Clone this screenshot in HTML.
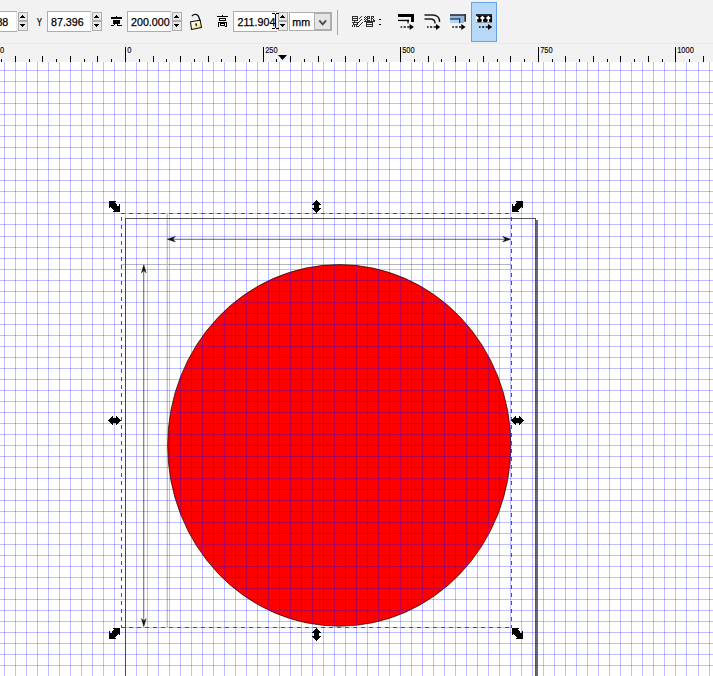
<!DOCTYPE html><html><head><meta charset="utf-8"><title>Inkscape</title><style>
html,body{margin:0;padding:0;background:#fff;overflow:hidden}
body{width:713px;height:676px;position:relative;font-family:"Liberation Sans",sans-serif}
svg{position:absolute;left:0;top:0;display:block}
text{font-family:"Liberation Sans",sans-serif}
.tb text{stroke:#000;stroke-width:0.25px}
</style></head><body>
<svg width="713" height="676" viewBox="0 0 713 676">
<rect x="0" y="0" width="713" height="676" fill="#fff"/>
<rect x="166.6" y="214" width="1.4" height="413" fill="#c2c2c2"/>
<g shape-rendering="crispEdges">
<rect x="121" y="264" width="391" height="1" fill="#b6b6b6"/>
<rect x="121" y="627" width="391" height="1" fill="#c8c8c8"/>
</g>
<g fill="#8a8a8a">
<rect x="172" y="238.7" width="334" height="1.3"/>
<rect x="143" y="270" width="1.3" height="352"/>
</g>
<g fill="#111" stroke="#111" stroke-width="0.5" stroke-linejoin="miter">
<path d="M167.3,239.2 L175.3,236.5 L172.8,239.2 L175.3,241.9 Z"/>
<path d="M510.7,239.2 L502.7,236.5 L505.2,239.2 L502.7,241.9 Z"/>
<path d="M143.8,264.8 L141.5,272.8 L143.8,270.4 L146.1,272.8 Z"/>
<path d="M143.8,626.6 L141.5,618.6 L143.8,621 L146.1,618.6 Z"/>
</g>
<ellipse cx="339.25" cy="445.4" rx="171.6" ry="180.8" fill="#ff0000" stroke="#1a0000" stroke-width="0.7"/>
<g shape-rendering="crispEdges">
<rect x="125" y="218" width="1" height="460" fill="#585858"/>
<rect x="125" y="218" width="411" height="1" fill="#585858"/>
<rect x="535" y="218" width="1" height="460" fill="#585858"/>
<rect x="536" y="220" width="2" height="460" fill="#6a6a6a"/>
</g>
<g shape-rendering="crispEdges" fill="#0000ff" fill-opacity="0.25">
<rect x="4" y="62" width="1" height="614"/>
<rect x="15" y="62" width="1" height="614"/>
<rect x="26" y="62" width="1" height="614"/>
<rect x="37" y="62" width="1" height="614"/>
<rect x="48" y="62" width="1" height="614"/>
<rect x="59" y="62" width="1" height="614"/>
<rect x="70" y="62" width="1" height="614"/>
<rect x="81" y="62" width="1" height="614"/>
<rect x="92" y="62" width="1" height="614"/>
<rect x="103" y="62" width="1" height="614"/>
<rect x="114" y="62" width="1" height="614"/>
<rect x="125" y="62" width="1" height="614"/>
<rect x="136" y="62" width="1" height="614"/>
<rect x="147" y="62" width="1" height="614"/>
<rect x="158" y="62" width="1" height="614"/>
<rect x="169" y="62" width="1" height="614"/>
<rect x="180" y="62" width="1" height="614"/>
<rect x="191" y="62" width="1" height="614"/>
<rect x="202" y="62" width="1" height="614"/>
<rect x="213" y="62" width="1" height="614"/>
<rect x="224" y="62" width="1" height="614"/>
<rect x="235" y="62" width="1" height="614"/>
<rect x="246" y="62" width="1" height="614"/>
<rect x="257" y="62" width="1" height="614"/>
<rect x="268" y="62" width="1" height="614"/>
<rect x="279" y="62" width="1" height="614"/>
<rect x="290" y="62" width="1" height="614"/>
<rect x="301" y="62" width="1" height="614"/>
<rect x="312" y="62" width="1" height="614"/>
<rect x="323" y="62" width="1" height="614"/>
<rect x="334" y="62" width="1" height="614"/>
<rect x="345" y="62" width="1" height="614"/>
<rect x="356" y="62" width="1" height="614"/>
<rect x="367" y="62" width="1" height="614"/>
<rect x="378" y="62" width="1" height="614"/>
<rect x="389" y="62" width="1" height="614"/>
<rect x="400" y="62" width="1" height="614"/>
<rect x="411" y="62" width="1" height="614"/>
<rect x="422" y="62" width="1" height="614"/>
<rect x="433" y="62" width="1" height="614"/>
<rect x="444" y="62" width="1" height="614"/>
<rect x="455" y="62" width="1" height="614"/>
<rect x="466" y="62" width="1" height="614"/>
<rect x="477" y="62" width="1" height="614"/>
<rect x="488" y="62" width="1" height="614"/>
<rect x="499" y="62" width="1" height="614"/>
<rect x="510" y="62" width="1" height="614"/>
<rect x="521" y="62" width="1" height="614"/>
<rect x="532" y="62" width="1" height="614"/>
<rect x="543" y="62" width="1" height="614"/>
<rect x="554" y="62" width="1" height="614"/>
<rect x="565" y="62" width="1" height="614"/>
<rect x="576" y="62" width="1" height="614"/>
<rect x="587" y="62" width="1" height="614"/>
<rect x="598" y="62" width="1" height="614"/>
<rect x="609" y="62" width="1" height="614"/>
<rect x="620" y="62" width="1" height="614"/>
<rect x="631" y="62" width="1" height="614"/>
<rect x="642" y="62" width="1" height="614"/>
<rect x="653" y="62" width="1" height="614"/>
<rect x="664" y="62" width="1" height="614"/>
<rect x="675" y="62" width="1" height="614"/>
<rect x="686" y="62" width="1" height="614"/>
<rect x="698" y="62" width="1" height="614"/>
<rect x="709" y="62" width="1" height="614"/>
<rect x="0" y="70" width="713" height="1"/>
<rect x="0" y="81" width="713" height="1"/>
<rect x="0" y="92" width="713" height="1"/>
<rect x="0" y="103" width="713" height="1"/>
<rect x="0" y="114" width="713" height="1"/>
<rect x="0" y="125" width="713" height="1"/>
<rect x="0" y="136" width="713" height="1"/>
<rect x="0" y="147" width="713" height="1"/>
<rect x="0" y="158" width="713" height="1"/>
<rect x="0" y="169" width="713" height="1"/>
<rect x="0" y="180" width="713" height="1"/>
<rect x="0" y="191" width="713" height="1"/>
<rect x="0" y="202" width="713" height="1"/>
<rect x="0" y="213" width="713" height="1"/>
<rect x="0" y="224" width="713" height="1"/>
<rect x="0" y="236" width="713" height="1"/>
<rect x="0" y="247" width="713" height="1"/>
<rect x="0" y="258" width="713" height="1"/>
<rect x="0" y="269" width="713" height="1"/>
<rect x="0" y="280" width="713" height="1"/>
<rect x="0" y="291" width="713" height="1"/>
<rect x="0" y="302" width="713" height="1"/>
<rect x="0" y="313" width="713" height="1"/>
<rect x="0" y="324" width="713" height="1"/>
<rect x="0" y="335" width="713" height="1"/>
<rect x="0" y="346" width="713" height="1"/>
<rect x="0" y="357" width="713" height="1"/>
<rect x="0" y="368" width="713" height="1"/>
<rect x="0" y="379" width="713" height="1"/>
<rect x="0" y="390" width="713" height="1"/>
<rect x="0" y="401" width="713" height="1"/>
<rect x="0" y="412" width="713" height="1"/>
<rect x="0" y="423" width="713" height="1"/>
<rect x="0" y="434" width="713" height="1"/>
<rect x="0" y="445" width="713" height="1"/>
<rect x="0" y="456" width="713" height="1"/>
<rect x="0" y="467" width="713" height="1"/>
<rect x="0" y="478" width="713" height="1"/>
<rect x="0" y="489" width="713" height="1"/>
<rect x="0" y="500" width="713" height="1"/>
<rect x="0" y="511" width="713" height="1"/>
<rect x="0" y="522" width="713" height="1"/>
<rect x="0" y="533" width="713" height="1"/>
<rect x="0" y="544" width="713" height="1"/>
<rect x="0" y="555" width="713" height="1"/>
<rect x="0" y="566" width="713" height="1"/>
<rect x="0" y="577" width="713" height="1"/>
<rect x="0" y="588" width="713" height="1"/>
<rect x="0" y="599" width="713" height="1"/>
<rect x="0" y="610" width="713" height="1"/>
<rect x="0" y="621" width="713" height="1"/>
<rect x="0" y="632" width="713" height="1"/>
<rect x="0" y="643" width="713" height="1"/>
<rect x="0" y="654" width="713" height="1"/>
<rect x="0" y="665" width="713" height="1"/>
</g>
<g shape-rendering="crispEdges" fill="#55554b">
<rect x="121" y="213" width="4" height="1"/>
<rect x="121" y="627" width="4" height="1"/>
<rect x="129" y="213" width="4" height="1"/>
<rect x="129" y="627" width="4" height="1"/>
<rect x="137" y="213" width="4" height="1"/>
<rect x="137" y="627" width="4" height="1"/>
<rect x="145" y="213" width="4" height="1"/>
<rect x="145" y="627" width="4" height="1"/>
<rect x="153" y="213" width="4" height="1"/>
<rect x="153" y="627" width="4" height="1"/>
<rect x="161" y="213" width="4" height="1"/>
<rect x="161" y="627" width="4" height="1"/>
<rect x="169" y="213" width="4" height="1"/>
<rect x="169" y="627" width="4" height="1"/>
<rect x="177" y="213" width="4" height="1"/>
<rect x="177" y="627" width="4" height="1"/>
<rect x="185" y="213" width="4" height="1"/>
<rect x="185" y="627" width="4" height="1"/>
<rect x="193" y="213" width="4" height="1"/>
<rect x="193" y="627" width="4" height="1"/>
<rect x="201" y="213" width="4" height="1"/>
<rect x="201" y="627" width="4" height="1"/>
<rect x="209" y="213" width="4" height="1"/>
<rect x="209" y="627" width="4" height="1"/>
<rect x="217" y="213" width="4" height="1"/>
<rect x="217" y="627" width="4" height="1"/>
<rect x="225" y="213" width="4" height="1"/>
<rect x="225" y="627" width="4" height="1"/>
<rect x="233" y="213" width="4" height="1"/>
<rect x="233" y="627" width="4" height="1"/>
<rect x="241" y="213" width="4" height="1"/>
<rect x="241" y="627" width="4" height="1"/>
<rect x="249" y="213" width="4" height="1"/>
<rect x="249" y="627" width="4" height="1"/>
<rect x="257" y="213" width="4" height="1"/>
<rect x="257" y="627" width="4" height="1"/>
<rect x="265" y="213" width="4" height="1"/>
<rect x="265" y="627" width="4" height="1"/>
<rect x="273" y="213" width="4" height="1"/>
<rect x="273" y="627" width="4" height="1"/>
<rect x="281" y="213" width="4" height="1"/>
<rect x="281" y="627" width="4" height="1"/>
<rect x="289" y="213" width="4" height="1"/>
<rect x="289" y="627" width="4" height="1"/>
<rect x="297" y="213" width="4" height="1"/>
<rect x="297" y="627" width="4" height="1"/>
<rect x="305" y="213" width="4" height="1"/>
<rect x="305" y="627" width="4" height="1"/>
<rect x="313" y="213" width="4" height="1"/>
<rect x="313" y="627" width="4" height="1"/>
<rect x="321" y="213" width="4" height="1"/>
<rect x="321" y="627" width="4" height="1"/>
<rect x="329" y="213" width="4" height="1"/>
<rect x="329" y="627" width="4" height="1"/>
<rect x="337" y="213" width="4" height="1"/>
<rect x="337" y="627" width="4" height="1"/>
<rect x="345" y="213" width="4" height="1"/>
<rect x="345" y="627" width="4" height="1"/>
<rect x="353" y="213" width="4" height="1"/>
<rect x="353" y="627" width="4" height="1"/>
<rect x="361" y="213" width="4" height="1"/>
<rect x="361" y="627" width="4" height="1"/>
<rect x="369" y="213" width="4" height="1"/>
<rect x="369" y="627" width="4" height="1"/>
<rect x="377" y="213" width="4" height="1"/>
<rect x="377" y="627" width="4" height="1"/>
<rect x="385" y="213" width="4" height="1"/>
<rect x="385" y="627" width="4" height="1"/>
<rect x="393" y="213" width="4" height="1"/>
<rect x="393" y="627" width="4" height="1"/>
<rect x="401" y="213" width="4" height="1"/>
<rect x="401" y="627" width="4" height="1"/>
<rect x="409" y="213" width="4" height="1"/>
<rect x="409" y="627" width="4" height="1"/>
<rect x="417" y="213" width="4" height="1"/>
<rect x="417" y="627" width="4" height="1"/>
<rect x="425" y="213" width="4" height="1"/>
<rect x="425" y="627" width="4" height="1"/>
<rect x="433" y="213" width="4" height="1"/>
<rect x="433" y="627" width="4" height="1"/>
<rect x="441" y="213" width="4" height="1"/>
<rect x="441" y="627" width="4" height="1"/>
<rect x="449" y="213" width="4" height="1"/>
<rect x="449" y="627" width="4" height="1"/>
<rect x="457" y="213" width="4" height="1"/>
<rect x="457" y="627" width="4" height="1"/>
<rect x="465" y="213" width="4" height="1"/>
<rect x="465" y="627" width="4" height="1"/>
<rect x="473" y="213" width="4" height="1"/>
<rect x="473" y="627" width="4" height="1"/>
<rect x="481" y="213" width="4" height="1"/>
<rect x="481" y="627" width="4" height="1"/>
<rect x="489" y="213" width="4" height="1"/>
<rect x="489" y="627" width="4" height="1"/>
<rect x="497" y="213" width="4" height="1"/>
<rect x="497" y="627" width="4" height="1"/>
<rect x="505" y="213" width="4" height="1"/>
<rect x="505" y="627" width="4" height="1"/>
<rect x="121" y="217" width="1" height="4"/>
<rect x="511" y="217" width="1" height="4"/>
<rect x="121" y="225" width="1" height="4"/>
<rect x="511" y="225" width="1" height="4"/>
<rect x="121" y="233" width="1" height="4"/>
<rect x="511" y="233" width="1" height="4"/>
<rect x="121" y="241" width="1" height="4"/>
<rect x="511" y="241" width="1" height="4"/>
<rect x="121" y="249" width="1" height="4"/>
<rect x="511" y="249" width="1" height="4"/>
<rect x="121" y="257" width="1" height="4"/>
<rect x="511" y="257" width="1" height="4"/>
<rect x="121" y="265" width="1" height="4"/>
<rect x="511" y="265" width="1" height="4"/>
<rect x="121" y="273" width="1" height="4"/>
<rect x="511" y="273" width="1" height="4"/>
<rect x="121" y="281" width="1" height="4"/>
<rect x="511" y="281" width="1" height="4"/>
<rect x="121" y="289" width="1" height="4"/>
<rect x="511" y="289" width="1" height="4"/>
<rect x="121" y="297" width="1" height="4"/>
<rect x="511" y="297" width="1" height="4"/>
<rect x="121" y="305" width="1" height="4"/>
<rect x="511" y="305" width="1" height="4"/>
<rect x="121" y="313" width="1" height="4"/>
<rect x="511" y="313" width="1" height="4"/>
<rect x="121" y="321" width="1" height="4"/>
<rect x="511" y="321" width="1" height="4"/>
<rect x="121" y="329" width="1" height="4"/>
<rect x="511" y="329" width="1" height="4"/>
<rect x="121" y="337" width="1" height="4"/>
<rect x="511" y="337" width="1" height="4"/>
<rect x="121" y="345" width="1" height="4"/>
<rect x="511" y="345" width="1" height="4"/>
<rect x="121" y="353" width="1" height="4"/>
<rect x="511" y="353" width="1" height="4"/>
<rect x="121" y="361" width="1" height="4"/>
<rect x="511" y="361" width="1" height="4"/>
<rect x="121" y="369" width="1" height="4"/>
<rect x="511" y="369" width="1" height="4"/>
<rect x="121" y="377" width="1" height="4"/>
<rect x="511" y="377" width="1" height="4"/>
<rect x="121" y="385" width="1" height="4"/>
<rect x="511" y="385" width="1" height="4"/>
<rect x="121" y="393" width="1" height="4"/>
<rect x="511" y="393" width="1" height="4"/>
<rect x="121" y="401" width="1" height="4"/>
<rect x="511" y="401" width="1" height="4"/>
<rect x="121" y="409" width="1" height="4"/>
<rect x="511" y="409" width="1" height="4"/>
<rect x="121" y="417" width="1" height="4"/>
<rect x="511" y="417" width="1" height="4"/>
<rect x="121" y="425" width="1" height="4"/>
<rect x="511" y="425" width="1" height="4"/>
<rect x="121" y="433" width="1" height="4"/>
<rect x="511" y="433" width="1" height="4"/>
<rect x="121" y="441" width="1" height="4"/>
<rect x="511" y="441" width="1" height="4"/>
<rect x="121" y="449" width="1" height="4"/>
<rect x="511" y="449" width="1" height="4"/>
<rect x="121" y="457" width="1" height="4"/>
<rect x="511" y="457" width="1" height="4"/>
<rect x="121" y="465" width="1" height="4"/>
<rect x="511" y="465" width="1" height="4"/>
<rect x="121" y="473" width="1" height="4"/>
<rect x="511" y="473" width="1" height="4"/>
<rect x="121" y="481" width="1" height="4"/>
<rect x="511" y="481" width="1" height="4"/>
<rect x="121" y="489" width="1" height="4"/>
<rect x="511" y="489" width="1" height="4"/>
<rect x="121" y="497" width="1" height="4"/>
<rect x="511" y="497" width="1" height="4"/>
<rect x="121" y="505" width="1" height="4"/>
<rect x="511" y="505" width="1" height="4"/>
<rect x="121" y="513" width="1" height="4"/>
<rect x="511" y="513" width="1" height="4"/>
<rect x="121" y="521" width="1" height="4"/>
<rect x="511" y="521" width="1" height="4"/>
<rect x="121" y="529" width="1" height="4"/>
<rect x="511" y="529" width="1" height="4"/>
<rect x="121" y="537" width="1" height="4"/>
<rect x="511" y="537" width="1" height="4"/>
<rect x="121" y="545" width="1" height="4"/>
<rect x="511" y="545" width="1" height="4"/>
<rect x="121" y="553" width="1" height="4"/>
<rect x="511" y="553" width="1" height="4"/>
<rect x="121" y="561" width="1" height="4"/>
<rect x="511" y="561" width="1" height="4"/>
<rect x="121" y="569" width="1" height="4"/>
<rect x="511" y="569" width="1" height="4"/>
<rect x="121" y="577" width="1" height="4"/>
<rect x="511" y="577" width="1" height="4"/>
<rect x="121" y="585" width="1" height="4"/>
<rect x="511" y="585" width="1" height="4"/>
<rect x="121" y="593" width="1" height="4"/>
<rect x="511" y="593" width="1" height="4"/>
<rect x="121" y="601" width="1" height="4"/>
<rect x="511" y="601" width="1" height="4"/>
<rect x="121" y="609" width="1" height="4"/>
<rect x="511" y="609" width="1" height="4"/>
<rect x="121" y="617" width="1" height="4"/>
<rect x="511" y="617" width="1" height="4"/>
<rect x="121" y="625" width="1" height="3"/>
<rect x="511" y="625" width="1" height="3"/>
</g>
<g shape-rendering="crispEdges" fill="#000">
<rect x="516" y="201" width="7" height="1"/><rect x="517" y="202" width="6" height="1"/><rect x="516" y="203" width="7" height="1"/><rect x="512" y="204" width="1" height="1"/><rect x="515" y="204" width="8" height="1"/><rect x="512" y="205" width="1" height="1"/><rect x="515" y="205" width="8" height="1"/><rect x="512" y="206" width="11" height="1"/><rect x="512" y="207" width="9" height="1"/><rect x="522" y="207" width="1" height="1"/><rect x="512" y="208" width="8" height="1"/><rect x="512" y="209" width="7" height="1"/><rect x="512" y="210" width="6" height="1"/><rect x="512" y="211" width="7" height="1"/>
<rect x="109" y="201" width="7" height="1"/><rect x="109" y="202" width="6" height="1"/><rect x="109" y="203" width="7" height="1"/><rect x="109" y="204" width="8" height="1"/><rect x="119" y="204" width="1" height="1"/><rect x="109" y="205" width="8" height="1"/><rect x="119" y="205" width="1" height="1"/><rect x="109" y="206" width="11" height="1"/><rect x="109" y="207" width="1" height="1"/><rect x="111" y="207" width="9" height="1"/><rect x="112" y="208" width="8" height="1"/><rect x="113" y="209" width="7" height="1"/><rect x="114" y="210" width="6" height="1"/><rect x="113" y="211" width="7" height="1"/>
<rect x="113" y="628" width="7" height="1"/><rect x="114" y="629" width="6" height="1"/><rect x="113" y="630" width="7" height="1"/><rect x="109" y="631" width="1" height="1"/><rect x="112" y="631" width="8" height="1"/><rect x="109" y="632" width="1" height="1"/><rect x="112" y="632" width="8" height="1"/><rect x="109" y="633" width="11" height="1"/><rect x="109" y="634" width="9" height="1"/><rect x="119" y="634" width="1" height="1"/><rect x="109" y="635" width="8" height="1"/><rect x="109" y="636" width="7" height="1"/><rect x="109" y="637" width="6" height="1"/><rect x="109" y="638" width="7" height="1"/>
<rect x="512" y="628" width="7" height="1"/><rect x="512" y="629" width="6" height="1"/><rect x="512" y="630" width="7" height="1"/><rect x="512" y="631" width="8" height="1"/><rect x="522" y="631" width="1" height="1"/><rect x="512" y="632" width="8" height="1"/><rect x="522" y="632" width="1" height="1"/><rect x="512" y="633" width="11" height="1"/><rect x="512" y="634" width="1" height="1"/><rect x="514" y="634" width="9" height="1"/><rect x="515" y="635" width="8" height="1"/><rect x="516" y="636" width="7" height="1"/><rect x="517" y="637" width="6" height="1"/><rect x="516" y="638" width="7" height="1"/>
<rect x="316" y="200" width="1" height="1"/><rect x="315" y="201" width="3" height="1"/><rect x="314" y="202" width="5" height="1"/><rect x="313" y="203" width="7" height="1"/><rect x="312" y="204" width="9" height="1"/><rect x="314" y="205" width="5" height="1"/><rect x="314" y="206" width="5" height="1"/><rect x="314" y="207" width="5" height="1"/><rect x="312" y="208" width="9" height="1"/><rect x="313" y="209" width="7" height="1"/><rect x="314" y="210" width="5" height="1"/><rect x="315" y="211" width="3" height="1"/><rect x="316" y="212" width="1" height="1"/>
<rect x="316" y="628" width="1" height="1"/><rect x="315" y="629" width="3" height="1"/><rect x="314" y="630" width="5" height="1"/><rect x="313" y="631" width="7" height="1"/><rect x="312" y="632" width="9" height="1"/><rect x="314" y="633" width="5" height="1"/><rect x="314" y="634" width="5" height="1"/><rect x="314" y="635" width="5" height="1"/><rect x="312" y="636" width="9" height="1"/><rect x="313" y="637" width="7" height="1"/><rect x="314" y="638" width="5" height="1"/><rect x="315" y="639" width="3" height="1"/><rect x="316" y="640" width="1" height="1"/>
<rect x="112" y="416" width="1" height="1"/><rect x="116" y="416" width="1" height="1"/><rect x="111" y="417" width="2" height="1"/><rect x="116" y="417" width="2" height="1"/><rect x="110" y="418" width="9" height="1"/><rect x="109" y="419" width="11" height="1"/><rect x="108" y="420" width="13" height="1"/><rect x="109" y="421" width="11" height="1"/><rect x="110" y="422" width="9" height="1"/><rect x="111" y="423" width="2" height="1"/><rect x="116" y="423" width="2" height="1"/><rect x="112" y="424" width="1" height="1"/><rect x="116" y="424" width="1" height="1"/>
<rect x="515" y="416" width="1" height="1"/><rect x="519" y="416" width="1" height="1"/><rect x="514" y="417" width="2" height="1"/><rect x="519" y="417" width="2" height="1"/><rect x="513" y="418" width="9" height="1"/><rect x="512" y="419" width="11" height="1"/><rect x="511" y="420" width="13" height="1"/><rect x="512" y="421" width="11" height="1"/><rect x="513" y="422" width="9" height="1"/><rect x="514" y="423" width="2" height="1"/><rect x="519" y="423" width="2" height="1"/><rect x="515" y="424" width="1" height="1"/><rect x="519" y="424" width="1" height="1"/>
</g>
<rect x="0" y="0" width="713" height="62" fill="#f2f2f2"/>
<rect x="0" y="43" width="713" height="1" fill="#e9e9e9"/>
<g shape-rendering="crispEdges" fill="#000">
<rect x="1" y="59" width="1" height="3"/>
<rect x="15" y="56" width="1" height="6"/>
<rect x="29" y="59" width="1" height="3"/>
<rect x="42" y="56" width="1" height="6"/>
<rect x="56" y="59" width="1" height="3"/>
<rect x="70" y="56" width="1" height="6"/>
<rect x="84" y="59" width="1" height="3"/>
<rect x="97" y="56" width="1" height="6"/>
<rect x="111" y="59" width="1" height="3"/>
<rect x="125" y="47" width="1" height="15"/>
<rect x="139" y="59" width="1" height="3"/>
<rect x="153" y="56" width="1" height="6"/>
<rect x="166" y="59" width="1" height="3"/>
<rect x="180" y="56" width="1" height="6"/>
<rect x="194" y="59" width="1" height="3"/>
<rect x="208" y="56" width="1" height="6"/>
<rect x="221" y="59" width="1" height="3"/>
<rect x="235" y="56" width="1" height="6"/>
<rect x="249" y="59" width="1" height="3"/>
<rect x="263" y="47" width="1" height="15"/>
<rect x="276" y="59" width="1" height="3"/>
<rect x="290" y="56" width="1" height="6"/>
<rect x="304" y="59" width="1" height="3"/>
<rect x="318" y="56" width="1" height="6"/>
<rect x="331" y="59" width="1" height="3"/>
<rect x="345" y="56" width="1" height="6"/>
<rect x="359" y="59" width="1" height="3"/>
<rect x="373" y="56" width="1" height="6"/>
<rect x="386" y="59" width="1" height="3"/>
<rect x="400" y="47" width="1" height="15"/>
<rect x="414" y="59" width="1" height="3"/>
<rect x="428" y="56" width="1" height="6"/>
<rect x="441" y="59" width="1" height="3"/>
<rect x="455" y="56" width="1" height="6"/>
<rect x="469" y="59" width="1" height="3"/>
<rect x="483" y="56" width="1" height="6"/>
<rect x="497" y="59" width="1" height="3"/>
<rect x="510" y="56" width="1" height="6"/>
<rect x="524" y="59" width="1" height="3"/>
<rect x="538" y="47" width="1" height="15"/>
<rect x="552" y="59" width="1" height="3"/>
<rect x="565" y="56" width="1" height="6"/>
<rect x="579" y="59" width="1" height="3"/>
<rect x="593" y="56" width="1" height="6"/>
<rect x="607" y="59" width="1" height="3"/>
<rect x="620" y="56" width="1" height="6"/>
<rect x="634" y="59" width="1" height="3"/>
<rect x="648" y="56" width="1" height="6"/>
<rect x="662" y="59" width="1" height="3"/>
<rect x="675" y="47" width="1" height="15"/>
<rect x="689" y="59" width="1" height="3"/>
<rect x="703" y="56" width="1" height="6"/>
</g>
<g font-size="8.3" fill="#000" stroke="#000" stroke-width="0.12">
<text transform="translate(127.2,53.3) scale(0.9,1)">0</text>
<text transform="translate(265.2,53.3) scale(0.9,1)">250</text>
<text transform="translate(402.2,53.3) scale(0.9,1)">500</text>
<text transform="translate(540.2,53.3) scale(0.9,1)">750</text>
<text transform="translate(677.2,53.3) scale(0.9,1)">1000</text>
<text transform="translate(-10.7,53.3) scale(0.9,1)">-250</text>
</g>
<path d="M278,55 L287,55 L282.5,60 Z" fill="#000"/>
<g font-size="10.7" fill="#000" class="tb">
<rect x="-20" y="11" width="37" height="21" fill="#fff"/>
<g shape-rendering="crispEdges"><rect x="-20" y="11" width="37" height="1" fill="#abadb6"/><rect x="-20" y="31" width="37" height="1" fill="#abadb6"/><rect x="-20" y="11" width="1" height="21" fill="#abadb6"/><rect x="16" y="12" width="1" height="19" fill="#e6e6e9"/></g>
<g shape-rendering="crispEdges"><rect x="18" y="12" width="10" height="19" fill="#adadad"/><rect x="19" y="13" width="8" height="7" fill="#e9e9e9"/><rect x="19" y="22" width="8" height="8" fill="#e9e9e9"/><g fill="#000"><rect x="22" y="15" width="1" height="1"/><rect x="21" y="16" width="3" height="1"/><rect x="20" y="17" width="5" height="1"/><rect x="20" y="24" width="5" height="1"/><rect x="21" y="25" width="3" height="1"/><rect x="22" y="26" width="1" height="1"/></g></g>
<text x="-3.6" y="26">38</text>
<text x="0" y="26" transform="translate(36.7,0) scale(0.74,1)">Y</text>
<rect x="47" y="11" width="44" height="21" fill="#fff"/>
<g shape-rendering="crispEdges"><rect x="47" y="11" width="44" height="1" fill="#abadb6"/><rect x="47" y="31" width="44" height="1" fill="#abadb6"/><rect x="47" y="11" width="1" height="21" fill="#abadb6"/><rect x="90" y="12" width="1" height="19" fill="#e6e6e9"/></g>
<g shape-rendering="crispEdges"><rect x="92" y="12" width="10" height="19" fill="#adadad"/><rect x="93" y="13" width="8" height="7" fill="#e9e9e9"/><rect x="93" y="22" width="8" height="8" fill="#e9e9e9"/><g fill="#000"><rect x="96" y="15" width="1" height="1"/><rect x="95" y="16" width="3" height="1"/><rect x="94" y="17" width="5" height="1"/><rect x="94" y="24" width="5" height="1"/><rect x="95" y="25" width="3" height="1"/><rect x="96" y="26" width="1" height="1"/></g></g>
<text x="51" y="26">87.396</text>
<rect x="127" y="11" width="44" height="21" fill="#fff"/>
<g shape-rendering="crispEdges"><rect x="127" y="11" width="44" height="1" fill="#abadb6"/><rect x="127" y="31" width="44" height="1" fill="#abadb6"/><rect x="127" y="11" width="1" height="21" fill="#abadb6"/><rect x="170" y="12" width="1" height="19" fill="#e6e6e9"/></g>
<g shape-rendering="crispEdges"><rect x="172" y="12" width="10" height="19" fill="#adadad"/><rect x="173" y="13" width="8" height="7" fill="#e9e9e9"/><rect x="173" y="22" width="8" height="8" fill="#e9e9e9"/><g fill="#000"><rect x="176" y="15" width="1" height="1"/><rect x="175" y="16" width="3" height="1"/><rect x="174" y="17" width="5" height="1"/><rect x="174" y="24" width="5" height="1"/><rect x="175" y="25" width="3" height="1"/><rect x="176" y="26" width="1" height="1"/></g></g>
<clipPath id="c1"><rect x="128" y="12" width="42" height="19"/></clipPath>
<text x="131" y="26" clip-path="url(#c1)">200.000</text>
<rect x="233" y="11" width="44" height="21" fill="#fff"/>
<g shape-rendering="crispEdges"><rect x="233" y="11" width="44" height="1" fill="#abadb6"/><rect x="233" y="31" width="44" height="1" fill="#abadb6"/><rect x="233" y="11" width="1" height="21" fill="#abadb6"/><rect x="276" y="12" width="1" height="19" fill="#e6e6e9"/></g>
<g shape-rendering="crispEdges"><rect x="278" y="12" width="10" height="19" fill="#adadad"/><rect x="279" y="13" width="8" height="7" fill="#e9e9e9"/><rect x="279" y="22" width="8" height="8" fill="#e9e9e9"/><g fill="#000"><rect x="282" y="15" width="1" height="1"/><rect x="281" y="16" width="3" height="1"/><rect x="280" y="17" width="5" height="1"/><rect x="280" y="24" width="5" height="1"/><rect x="281" y="25" width="3" height="1"/><rect x="282" y="26" width="1" height="1"/></g></g>
<text x="237.5" y="26">211.904</text>
<g shape-rendering="crispEdges" stroke="none"><rect x="289" y="12" width="43" height="19" fill="#adadad"/><rect x="290" y="13" width="24" height="17" fill="#fff"/><rect x="315" y="14" width="15" height="15" fill="#e5e5e5"/></g>
<text x="292.3" y="26">mm</text>
<path d="M319.3,20.4 L322.7,24.4 L326.1,20.4" fill="none" stroke="#4a4a4a" stroke-width="1.9"/>
</g>
<g shape-rendering="crispEdges" fill="#000"><rect x="275" y="14" width="1" height="14"/><rect x="272" y="13" width="3" height="1"/><rect x="276" y="13" width="3" height="1"/><rect x="272" y="28" width="3" height="1"/><rect x="276" y="28" width="3" height="1"/></g>
<rect x="337" y="10" width="1" height="25" fill="#a8a8a8" shape-rendering="crispEdges"/>
<g shape-rendering="crispEdges" fill="#000" fill-opacity="1"><rect x="116" y="16" width="1" height="1"/><rect x="111" y="17" width="11" height="1"/><rect x="111" y="18" width="11" height="1"/><rect x="113" y="20" width="7" height="1"/><rect x="113" y="21" width="7" height="1"/><rect x="113" y="22" width="7" height="1"/><rect x="113" y="23" width="7" height="1"/><rect x="114" y="24" width="1" height="1"/><rect x="117" y="24" width="1" height="1"/><rect x="111" y="25" width="3" height="1"/><rect x="117" y="25" width="5" height="1"/></g>
<g shape-rendering="crispEdges" fill="#000" fill-opacity="1"><rect x="222" y="15" width="1" height="1"/><rect x="217" y="16" width="11" height="1"/><rect x="219" y="18" width="7" height="1"/><rect x="219" y="19" width="1" height="1"/><rect x="225" y="19" width="1" height="1"/><rect x="219" y="20" width="7" height="1"/><rect x="218" y="22" width="9" height="1"/><rect x="218" y="23" width="1" height="1"/><rect x="220" y="23" width="5" height="1"/><rect x="226" y="23" width="1" height="1"/><rect x="218" y="24" width="1" height="1"/><rect x="220" y="24" width="1" height="1"/><rect x="224" y="24" width="1" height="1"/><rect x="226" y="24" width="1" height="1"/><rect x="218" y="25" width="1" height="1"/><rect x="220" y="25" width="5" height="1"/><rect x="226" y="25" width="1" height="1"/><rect x="218" y="26" width="1" height="1"/><rect x="225" y="26" width="2" height="1"/></g>
<g shape-rendering="crispEdges" fill="#000" fill-opacity="0.8"><rect x="352" y="16" width="6" height="1"/><rect x="361" y="16" width="1" height="1"/><rect x="352" y="17" width="1" height="1"/><rect x="357" y="17" width="1" height="1"/><rect x="360" y="17" width="1" height="1"/><rect x="352" y="18" width="6" height="1"/><rect x="359" y="18" width="1" height="1"/><rect x="352" y="19" width="1" height="1"/><rect x="357" y="19" width="1" height="1"/><rect x="361" y="19" width="1" height="1"/><rect x="352" y="20" width="6" height="1"/><rect x="360" y="20" width="1" height="1"/><rect x="354" y="21" width="1" height="1"/><rect x="359" y="21" width="1" height="1"/><rect x="352" y="22" width="7" height="1"/><rect x="362" y="22" width="1" height="1"/><rect x="353" y="23" width="1" height="1"/><rect x="357" y="23" width="1" height="1"/><rect x="361" y="23" width="1" height="1"/><rect x="353" y="24" width="5" height="1"/><rect x="360" y="24" width="1" height="1"/><rect x="352" y="25" width="1" height="1"/><rect x="354" y="25" width="1" height="1"/><rect x="356" y="25" width="1" height="1"/><rect x="359" y="25" width="1" height="1"/><rect x="352" y="26" width="1" height="1"/><rect x="354" y="26" width="1" height="1"/><rect x="356" y="26" width="3" height="1"/></g>
<g shape-rendering="crispEdges" fill="#000" fill-opacity="0.8"><rect x="365" y="16" width="1" height="1"/><rect x="367" y="16" width="3" height="1"/><rect x="371" y="16" width="3" height="1"/><rect x="364" y="17" width="1" height="1"/><rect x="366" y="17" width="2" height="1"/><rect x="369" y="17" width="1" height="1"/><rect x="371" y="17" width="1" height="1"/><rect x="373" y="17" width="1" height="1"/><rect x="365" y="18" width="1" height="1"/><rect x="367" y="18" width="3" height="1"/><rect x="371" y="18" width="2" height="1"/><rect x="364" y="19" width="1" height="1"/><rect x="366" y="19" width="2" height="1"/><rect x="371" y="19" width="1" height="1"/><rect x="373" y="19" width="1" height="1"/><rect x="365" y="20" width="1" height="1"/><rect x="367" y="20" width="3" height="1"/><rect x="371" y="20" width="1" height="1"/><rect x="373" y="20" width="2" height="1"/><rect x="364" y="21" width="11" height="1"/><rect x="366" y="22" width="7" height="1"/><rect x="366" y="23" width="1" height="1"/><rect x="372" y="23" width="1" height="1"/><rect x="366" y="24" width="7" height="1"/><rect x="366" y="25" width="1" height="1"/><rect x="372" y="25" width="1" height="1"/><rect x="366" y="26" width="7" height="1"/></g>
<g shape-rendering="crispEdges" fill="#000"><rect x="379" y="19" width="2" height="1"/><rect x="379" y="24" width="2" height="1"/></g>
<defs><linearGradient id="lk" x1="0" y1="0" x2="1" y2="1"><stop offset="0.1" stop-color="#ffffff"/><stop offset="0.5" stop-color="#faf4cc"/><stop offset="1" stop-color="#ecd040"/></linearGradient></defs>
<g><path d="M192.3,15.7 C193.6,14.1 196.6,14 198.1,15.7 C199.2,17 199.5,18.6 199.9,20.6" fill="none" stroke="#111" stroke-width="1.3" stroke-linecap="round"/><path d="M190.5,21.7 L200.2,20.2 L201.5,27.5 L191.5,29.4 Z" fill="url(#lk)" stroke="#111" stroke-width="1.05" stroke-linejoin="round"/><path d="M195,23.6 L197,23.4 L196.8,26.2 L195.9,26.3 Z" fill="#111"/></g>
<g shape-rendering="crispEdges" fill="#000"><rect x="398" y="14" width="16" height="3"/><rect x="411" y="14" width="3" height="8"/></g><g fill="#000"><rect x="398" y="19.8" width="10.9" height="1.3"/><rect x="407.2" y="19.8" width="1.7" height="2.6"/><rect x="407.2" y="22.4" width="1.7" height="1.2" fill-opacity="0.5"/></g>
<g fill="#1a1a1a" fill-opacity="0.85"><rect x="400.60" y="26.05" width="1.6" height="1.9"/><rect x="403.70" y="26.05" width="2.1" height="1.9"/><rect x="407.30" y="26.05" width="2.3" height="1.9"/></g><path d="M409.60,23.9 L413.85,27 L409.60,30.1 Z" fill="#000"/>
<g fill="none" stroke="#1c1c1c" stroke-width="1.4"><path d="M424.5,15 L432.5,15 C437,15 439.6,17.8 439.6,22"/><path d="M424.5,19 L430.5,19 C433.6,19 435,20.8 435,23.4"/></g>
<g fill="#1a1a1a" fill-opacity="0.85"><rect x="427.00" y="26.05" width="1.6" height="1.9"/><rect x="430.10" y="26.05" width="2.1" height="1.9"/><rect x="433.70" y="26.05" width="2.3" height="1.9"/></g><path d="M436.00,23.9 L440.25,27 L436.00,30.1 Z" fill="#000"/>
<g shape-rendering="crispEdges"><rect x="450" y="15" width="14" height="8" fill="#93b7df"/><rect x="450" y="19" width="9" height="4" fill="#b6d3ef"/></g><g fill="#25323f"><rect x="450" y="14.2" width="16" height="1.6"/><rect x="464.3" y="14.2" width="1.7" height="7.6"/><rect x="450" y="18.4" width="10.1" height="1.2"/><rect x="459" y="18.4" width="1.2" height="4.8"/></g>
<g fill="#1a1a1a" fill-opacity="0.85"><rect x="452.30" y="26.05" width="1.6" height="1.9"/><rect x="455.40" y="26.05" width="2.1" height="1.9"/><rect x="459.00" y="26.05" width="2.3" height="1.9"/></g><path d="M461.30,23.9 L465.55,27 L461.30,30.1 Z" fill="#000"/>
<g shape-rendering="crispEdges"><rect x="471" y="2" width="26" height="40" fill="#66a3e6"/><rect x="472" y="3" width="24" height="38" fill="#b7d8f8"/></g><rect x="476" y="14" width="16" height="8.4" fill="#000"/><rect x="476" y="14" width="16" height="1.7" fill="#27343f"/>
<clipPath id="c4"><rect x="476" y="14" width="16" height="8.3"/></clipPath><g fill="#fff" clip-path="url(#c4)"><path d="M473.9,17.9 L476.5,15.8 L479.1,17.9 L476.5,20 Z"/><rect x="475.9" y="19" width="1.2" height="2.5"/><path d="M473.9,22.9 L476.5,20.7 L479.1,22.9 Z"/><path d="M479.79999999999995,17.9 L482.4,15.8 L485.0,17.9 L482.4,20 Z"/><rect x="481.79999999999995" y="19" width="1.2" height="2.5"/><path d="M479.79999999999995,22.9 L482.4,20.7 L485.0,22.9 Z"/><path d="M485.7,17.9 L488.3,15.8 L490.90000000000003,17.9 L488.3,20 Z"/><rect x="487.7" y="19" width="1.2" height="2.5"/><path d="M485.7,22.9 L488.3,20.7 L490.90000000000003,22.9 Z"/></g>
<g fill="#1a1a1a" fill-opacity="0.85"><rect x="479.00" y="26.05" width="1.6" height="1.9"/><rect x="482.10" y="26.05" width="2.1" height="1.9"/><rect x="485.70" y="26.05" width="2.3" height="1.9"/></g><path d="M488.00,23.9 L492.25,27 L488.00,30.1 Z" fill="#000"/>
</svg></body></html>
